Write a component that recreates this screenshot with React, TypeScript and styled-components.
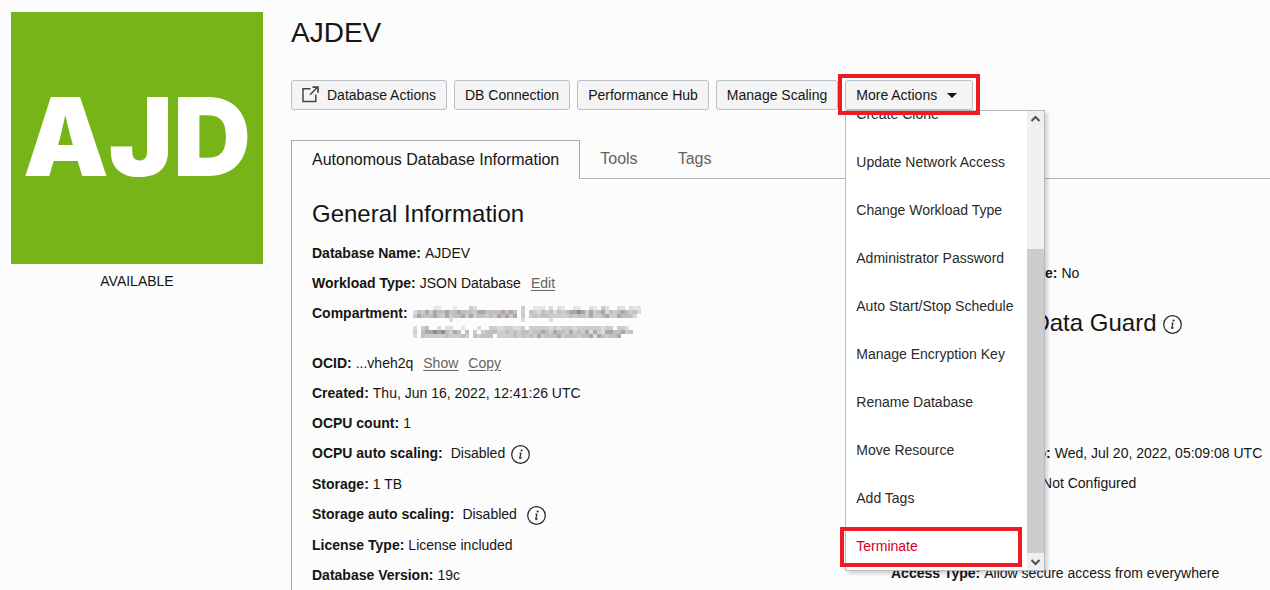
import React from "react";
import styled, { createGlobalStyle } from "styled-components";

const GlobalStyle = createGlobalStyle`
  * { box-sizing: border-box; }
  body {
    margin: 0;
    background: #fcfcfc;
    color: #161513;
    font: 14px/20px "Liberation Sans", Arial, sans-serif;
  }
`;

const Page = styled.div`
  display: flex;
  gap: 28px;
  min-height: 100vh;
  padding: 12px 0 0 11px;
  overflow: hidden;
`;

const Aside = styled.aside`
  flex: 0 0 252px;
  text-align: center;
`;

const Tile = styled.div`
  display: flex;
  align-items: center;
  justify-content: center;
  aspect-ratio: 1;
  margin-bottom: 7px;
  padding-bottom: 3px;
  background: #76b417;
  color: #fff;
  font: 900 108px/120px Inter, "Liberation Sans", sans-serif;
`;

const Main = styled.main`
  display: flex;
  flex: 1;
  flex-direction: column;
  min-width: 0;
`;

const Title = styled.h1`
  margin: 0;
  font-size: 28px;
  font-weight: 400;
  line-height: 42px;
`;

const Toolbar = styled.div`
  display: flex;
  gap: 7px;
  margin: 26px 0 30px;
`;

const Button = styled.button`
  display: flex;
  align-items: center;
  height: 30px;
  padding: 0 10px;
  border: 1px solid #b9bfc6;
  border-radius: 3px;
  background: #f4f4f4;
  color: inherit;
  font: inherit;
  white-space: nowrap;
`;

const LaunchIcon = styled.svg`
  width: 17px;
  height: 17px;
  margin: 0 8px 2px 0;
`;

const Caret = styled.span`
  margin: 0 5px 0 10px;
  border: 5px solid transparent;
  border-top-color: #161513;
  border-bottom: 0;
`;

const MenuAnchor = styled.div`
  position: relative;
`;

const Menu = styled.div`
  position: absolute;
  z-index: 1;
  top: 30px;
  left: 0;
  display: flex;
  width: 200px;
  height: 461px;
  border: 1px solid #b4bac1;
  background: #fff;
  box-shadow: 3px 3px 3px rgba(0, 0, 0, 0.15);
`;

const MenuList = styled.ul`
  display: flex;
  flex: 1;
  flex-direction: column;
  justify-content: flex-end;
  margin: 0;
  padding: 0;
  overflow: hidden;
  list-style: none;
`;

const MenuItem = styled.button<{ $danger?: boolean }>`
  display: block;
  width: 100%;
  height: 48px;
  padding: 0 10px 1px;
  border: 0;
  background: none;
  color: ${(p) => (p.$danger ? "#d6001c" : "#2b2a28")};
  font: inherit;
  text-align: left;
  white-space: nowrap;
`;

const ScrollTrack = styled.div`
  display: flex;
  flex: 0 0 17px;
  flex-direction: column;
  background: #f0f0f0;
`;

const ScrollArrow = styled.svg`
  width: 17px;
  height: 17px;
`;

const ScrollThumb = styled.div`
  flex: 0 0 304px;
  margin-top: auto;
  background: #cdcdcd;
`;

const Highlight = styled.div<{ $area: "button" | "item" }>`
  position: absolute;
  z-index: 2;
  top: ${(p) => (p.$area === "button" ? -6 : 447)}px;
  left: ${(p) => (p.$area === "button" ? -7 : -5)}px;
  width: ${(p) => (p.$area === "button" ? 142 : 182)}px;
  height: ${(p) => (p.$area === "button" ? 41 : 40)}px;
  border: 4px solid #ed1c24;
  pointer-events: none;
`;

const Tabs = styled.div`
  display: flex;
  height: 39px;
`;

const Tab = styled.button<{ $active?: boolean }>`
  padding: 0 20px;
  border: 1px solid ${(p) => (p.$active ? "#a9a9a9" : "transparent")};
  border-width: ${(p) => (p.$active ? "1px 1px 0" : "0 0 1px")};
  border-bottom-color: #b5b5b5;
  background: none;
  color: ${(p) => (p.$active ? "#161513" : "#66635f")};
  font: inherit;
  font-size: 16px;
`;

const TabRule = styled.div`
  flex: 1;
  border-bottom: 1px solid #b5b5b5;
`;

const Panel = styled.section`
  display: grid;
  flex: 1;
  grid-template-columns: minmax(0, 1fr) 379px;
  padding-left: 20px;
  border-left: 1px solid #a9a9a9;
`;

const Column = styled.div`
  padding-top: 20px;
`;

const Group = styled.section<{ $space: number }>`
  padding-top: ${(p) => p.$space}px;
`;

const Heading = styled.h2`
  display: flex;
  align-items: center;
  gap: 6px;
  margin: 0 0 14px;
  font-size: 24px;
  font-weight: 400;
  line-height: 30px;
  white-space: nowrap;
`;

const FieldRow = styled.div`
  display: flex;
  gap: 4px;
  margin-bottom: 10px;
  white-space: nowrap;

  &:last-child {
    margin-bottom: 0;
  }
`;

const Value = styled.span<{ $gap?: number }>`
  display: flex;
  gap: ${(p) => p.$gap ?? 10}px;
`;

const Link = styled.a`
  color: #66635f;
  text-decoration: underline;
  text-underline-offset: 2px;
`;

const InfoMark = styled.svg`
  width: 19px;
  height: 19px;
  margin-top: 2px;
`;

const Mosaic = styled.svg`
  width: 232px;
  height: 32px;
  margin: 3px 0 5px 1px;
`;

const Info = () => (
  <InfoMark viewBox="0 0 19 19" role="img" aria-label="Information">
    <circle cx="9.5" cy="9.5" r="8.8" fill="none" stroke="#222" strokeWidth="1.2" />
    <circle cx="10.6" cy="5.4" r="1" fill="#222" />
    <path d="M8.2 8.3 10 7.9" fill="none" stroke="#222" strokeWidth="0.8" />
    <path d="M10 7.8 8.8 12.6q-.2 1 .4.8l1.3-.9" fill="none" stroke="#222" strokeWidth="1.2" />
  </InfoMark>
);

const Field = ({ label, wide, children }: { label: string; wide?: boolean; children: React.ReactNode }) => (
  <FieldRow>
    <b>{label}:</b>
    {wide && <span />}
    {children}
  </FieldRow>
);

// One digit per cell: 0 is empty, 6 is darkest.
const redacted = [
  "000001100010003200000000000300111020210011002103200210211",
  "243535445445444355444454540304324342434556535345243454342",
  "354445435344535344343545350303434433333434435334533544420",
  "000000000200000000000000000200000020000000000000000000000",
  "",
  "2034002022001000200332233223033333232333233333323303320",
  "3045565643540403034443343434434454354435343525325544534",
  "2043333343334304344403333434343534445344434452543445000",
];
const shades = ["", "#e7e7e8", "#dadbdc", "#cdcccd", "#bfbfc1", "#aaa7a6", "#8b8c91"];
const tints = ["", "#dde3e7", "#e2dcd8", "#c6d0d3", "#ccbdb8", "#a0aab4", "#918c8c"];

const RedactedText = () => (
  <Mosaic viewBox="0 0 232 32" role="img" aria-label="Redacted" shapeRendering="crispEdges">
    {redacted.flatMap((row, y) =>
      [...row].map((c, x) =>
        c === "0" ? null : (
          <rect
            key={`${x}-${y}`}
            x={x * 4}
            y={y * 4}
            width="4"
            height="4"
            fill={((x * 7 + y * 5) % 4 === 0 ? tints : shades)[Number(c)]}
          />
        ),
      ),
    )}
  </Mosaic>
);

const menuItems = [
  "Create Clone",
  "Update Network Access",
  "Change Workload Type",
  "Administrator Password",
  "Auto Start/Stop Schedule",
  "Manage Encryption Key",
  "Rename Database",
  "Move Resource",
  "Add Tags",
  "Terminate",
];

export default function App() {
  return (
    <>
      <GlobalStyle />
      <Page>
        <Aside>
          <Tile>AJD</Tile>
          AVAILABLE
        </Aside>
        <Main>
          <Title>AJDEV</Title>
          <Toolbar>
            <Button>
              <LaunchIcon viewBox="0 0 17 17" fill="none" stroke="#444" strokeWidth="1.5">
                <path d="M8.5 2.8H1v12.6h12.8V8.5M8 8.8 15 1.8" />
                <path d="M10.5 1.2H16V6.7" strokeWidth="1.7" />
              </LaunchIcon>
              Database Actions
            </Button>
            <Button>DB Connection</Button>
            <Button>Performance Hub</Button>
            <Button>Manage Scaling</Button>
            <MenuAnchor>
              <Button aria-expanded="true">
                More Actions
                <Caret />
              </Button>
              <Menu>
                <MenuList>
                  {menuItems.map((item) => (
                    <li key={item}>
                      <MenuItem $danger={item === "Terminate"}>{item}</MenuItem>
                    </li>
                  ))}
                </MenuList>
                <ScrollTrack>
                  <ScrollArrow viewBox="0 0 17 17" fill="none" stroke="#505050" strokeWidth="2">
                    <path d="m4.5 10 4-4 4 4" />
                  </ScrollArrow>
                  <ScrollThumb />
                  <ScrollArrow viewBox="0 0 17 17" fill="none" stroke="#505050" strokeWidth="2">
                    <path d="m4.5 7 4 4 4-4" />
                  </ScrollArrow>
                </ScrollTrack>
              </Menu>
              <Highlight $area="button" />
              <Highlight $area="item" />
            </MenuAnchor>
          </Toolbar>
          <Tabs>
            <Tab $active>Autonomous Database Information</Tab>
            <Tab>Tools</Tab>
            <Tab>Tags</Tab>
            <TabRule />
          </Tabs>
          <Panel>
            <Column>
              <Heading>General Information</Heading>
              <Field label="Database Name">AJDEV</Field>
              <Field label="Workload Type">
                <Value>
                  JSON Database <Link href="#edit">Edit</Link>
                </Value>
              </Field>
              <Field label="Compartment">
                <RedactedText />
              </Field>
              <Field label="OCID">
                <Value>
                  ...vheh2q <Link href="#show">Show</Link> <Link href="#copy">Copy</Link>
                </Value>
              </Field>
              <Field label="Created">Thu, Jun 16, 2022, 12:41:26 UTC</Field>
              <Field label="OCPU count">1</Field>
              <Field label="OCPU auto scaling" wide>
                <Value $gap={6}>
                  Disabled <Info />
                </Value>
              </Field>
              <Field label="Storage">1 TB</Field>
              <Field label="Storage auto scaling" wide>
                <Value>
                  Disabled <Info />
                </Value>
              </Field>
              <Field label="License Type">License included</Field>
              <Field label="Database Version">19c</Field>
            </Column>
            <Column>
              <Group $space={64}>
                <Field label="Dedicated Infrastructure">No</Field>
              </Group>
              <Group $space={25}>
                <Heading>
                  Autonomous Data Guard <Info />
                </Heading>
              </Group>
              <Group $space={91}>
                <Field label="Last Automatic Backup">Wed, Jul 20, 2022, 05:09:08 UTC</Field>
                <Field label="Manual Backup Store">Not Configured</Field>
              </Group>
              <Group $space={70}>
                <Field label="Access Type">Allow secure access from everywhere</Field>
              </Group>
            </Column>
          </Panel>
        </Main>
      </Page>
    </>
  );
}
